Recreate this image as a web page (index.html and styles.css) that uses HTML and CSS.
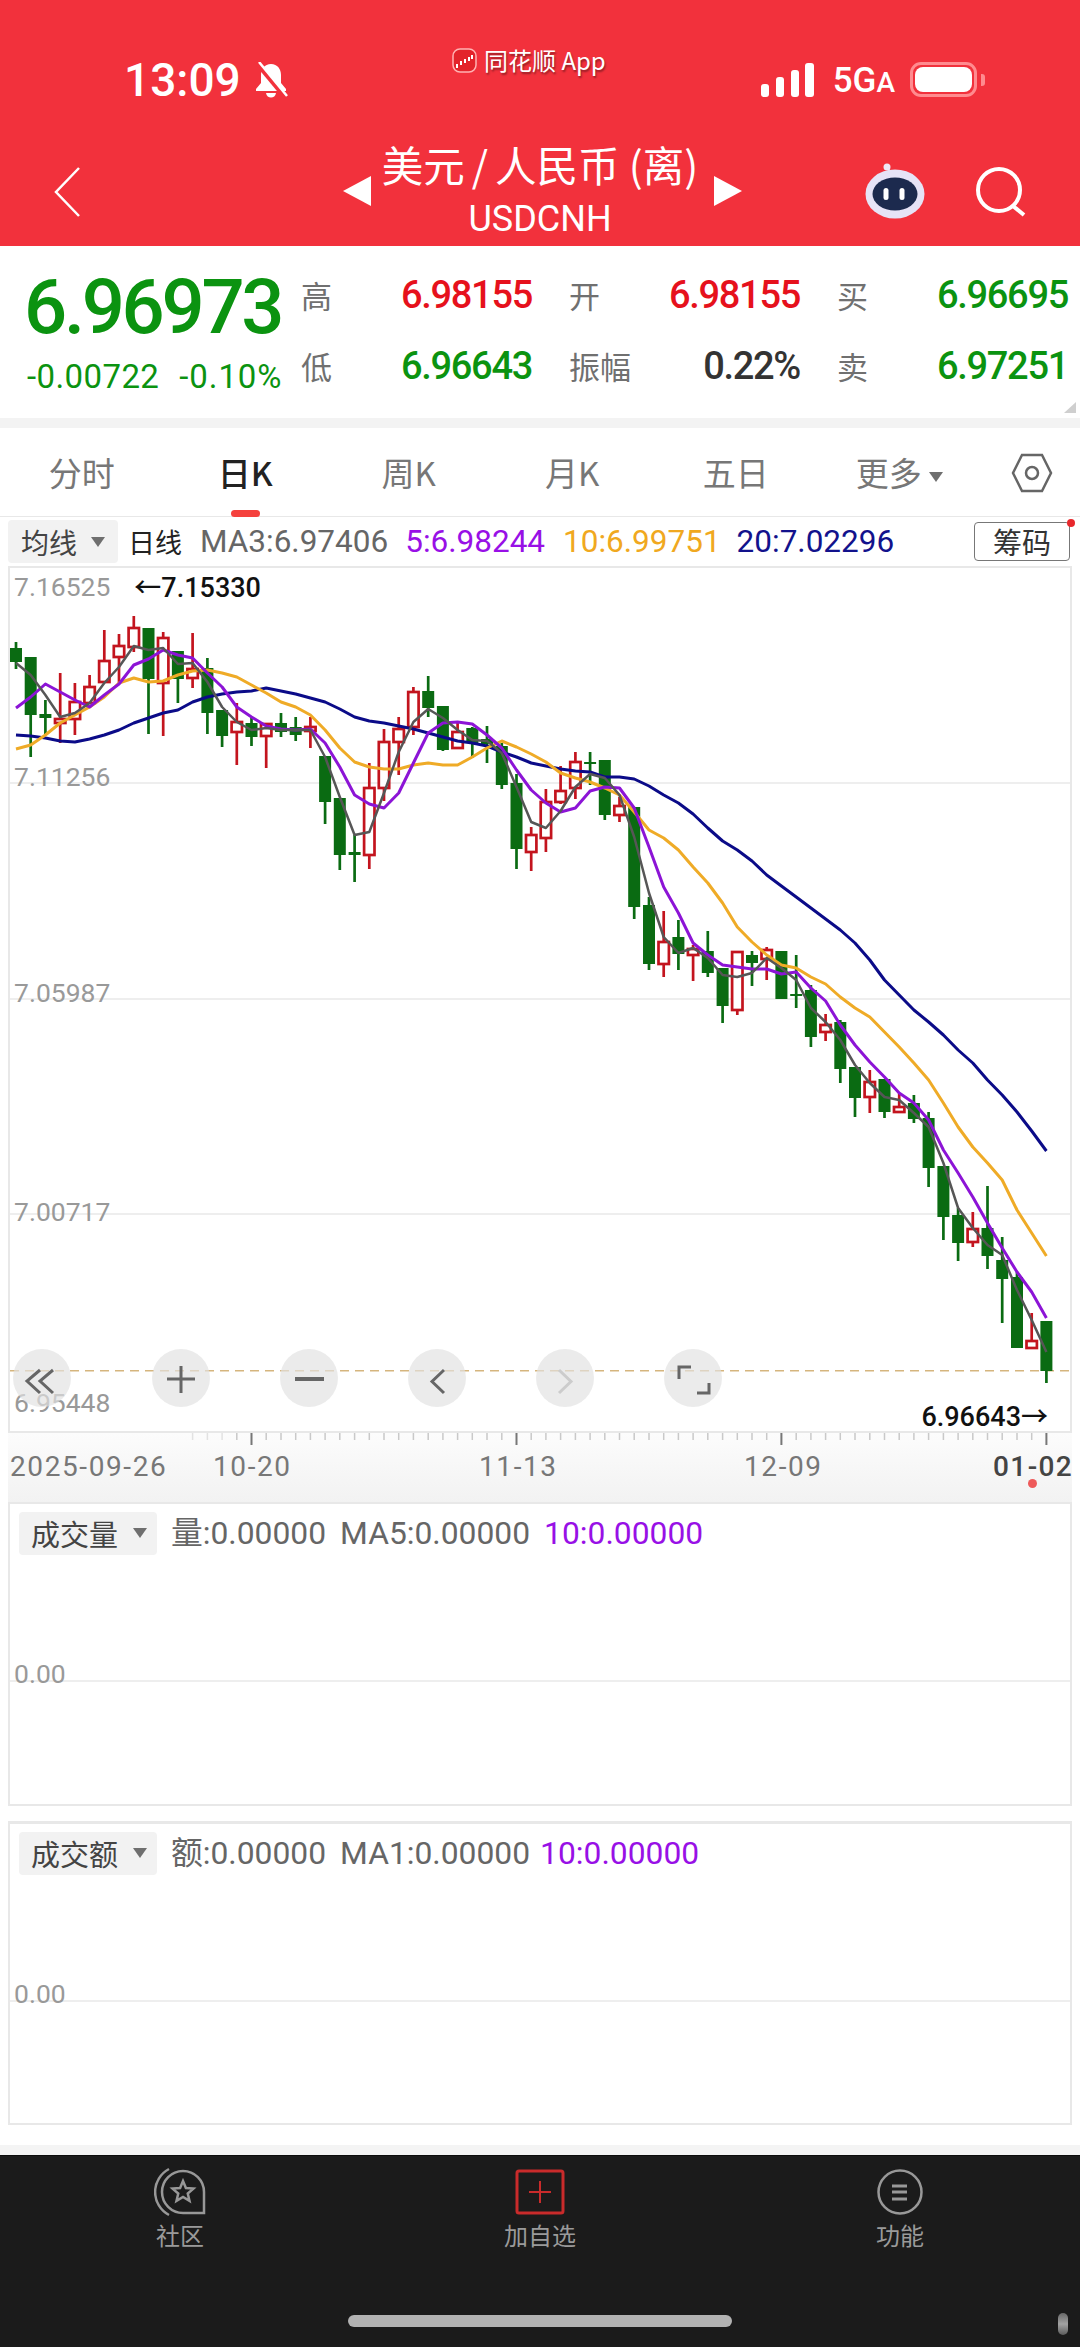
FILE: index.html
```html
<!DOCTYPE html>
<html lang="zh-CN">
<head>
<meta charset="utf-8">
<title>美元/人民币 (离)</title>
<link rel="stylesheet" href="styles.css">
</head>
<body>
<div class="screen">
  <header class="hero">
    <div class="status">
      <div class="clock">
        <span class="time">13:09</span>
        <svg class="bell" viewBox="0 0 36 36" width="36" height="36">
          <path class="bell-body" d="M18 2c-6.500 0-10 5-10 11v8l-5 6v2h30v-2l-5-6v-8c0-6-3.500-11-10-11z"/>
          <path class="bell-body" d="M13 31h10c-.5 3-2.500 4.500-5 4.500s-4.500-1.500-5-4.500z"/>
          <path class="bell-cut" d="M3 0l30 36"/>
          <path class="bell-slash" d="M6 0l28 34"/>
        </svg>
      </div>
      <div class="app-back">
        <svg class="app-logo" viewBox="0 0 25 25" width="25" height="25">
          <rect class="logo-frame" x="1" y="1" width="23" height="23" rx="7"/>
          <path class="logo-marks" d="M5 16v4M9 13v4M13 11v4M17 9v4M20 7v4"/>
        </svg>
        <span class="app-name">同花顺 App</span>
      </div>
      <div class="indicators">
        <div class="signal"><i></i><i></i><i></i><i></i></div>
        <span class="net">5G<small>A</small></span>
        <div class="battery"><div class="battery-fill"></div></div>
        <div class="battery-tip"></div>
      </div>
    </div>
    <nav class="nav">
      <div class="nav-left">
        <svg class="back" viewBox="0 0 30 52" width="30" height="52"><path d="M26 2L3 26l23 24"/></svg>
      </div>
      <div class="nav-mid">
        <span class="tri tri-left"></span>
        <div class="title-block">
          <div class="title">美元<span class="slash">/</span>人民币 (离)</div>
          <div class="subtitle">USDCNH</div>
        </div>
        <span class="tri tri-right"></span>
      </div>
      <div class="nav-right">
        <svg class="robot" viewBox="0 0 60 56" width="60" height="56">
          <path class="robot-stem" d="M22 5l5 6"/>
          <circle class="robot-ball" cx="22" cy="4" r="3.500"/>
          <ellipse class="robot-head" cx="30" cy="31" rx="29.500" ry="24.500"/>
          <ellipse class="robot-face" cx="30" cy="31" rx="22.500" ry="16.500"/>
          <rect class="robot-eye" x="18.500" y="25" width="5" height="12" rx="2.500"/>
          <rect class="robot-eye" x="34.500" y="25" width="5" height="12" rx="2.500"/>
        </svg>
        <svg class="search" viewBox="0 0 50 50" width="50" height="50">
          <circle cx="23" cy="23" r="21"/><path d="M37 39l11 9"/>
        </svg>
      </div>
    </nav>
  </header>

  <section class="quote">
    <div class="price-block">
      <div class="price">6.96973</div>
      <div class="change"><span class="chg">-0.00722</span><span class="pct">-0.10%</span></div>
    </div>
    <div class="stats">
      <div class="stat"><span class="k">高</span><span class="v up">6.98155</span></div>
      <div class="stat"><span class="k">开</span><span class="v up">6.98155</span></div>
      <div class="stat"><span class="k">买</span><span class="v down">6.96695</span></div>
      <div class="stat"><span class="k">低</span><span class="v down">6.96643</span></div>
      <div class="stat"><span class="k">振幅</span><span class="v flat">0.22%</span></div>
      <div class="stat"><span class="k">卖</span><span class="v down">6.97251</span></div>
    </div>
    <span class="corner"></span>
  </section>
  <div class="band"></div>

  <div class="tabs">
    <div class="tab">分时</div>
    <div class="tab tab-active">日K</div>
    <div class="tab">周K</div>
    <div class="tab">月K</div>
    <div class="tab">五日</div>
    <div class="tab">更多<span class="caret caret-tab"></span></div>
    <svg class="hex" viewBox="0 0 42 40" width="42" height="40">
      <path d="M11 2h20l9 18-9 18H11L2 20z"/><circle cx="21" cy="20" r="6"/>
    </svg>
  </div>

  <div class="ma-row">
    <div class="select select-ma"><span>均线</span><span class="caret"></span></div>
    <span class="ma-name">日线</span>
    <span class="ma ma-gray">MA3:6.97406</span>
    <span class="ma ma-purple">5:6.98244</span>
    <span class="ma ma-orange">10:6.99751</span>
    <span class="ma ma-navy">20:7.02296</span>
    <div class="chips">筹码<span class="chips-dot"></span></div>
  </div>

  <div class="chart">
    <div class="grid-row">
      <div class="label-line"><span class="axis">7.16525</span><span class="extreme">←7.15330</span></div>
      <span class="axis axis-low">7.11256</span>
    </div>
    <div class="grid-row grid-end"><span class="axis axis-low">7.05987</span></div>
    <div class="grid-row grid-end"><span class="axis axis-lower">7.00717</span></div>
    <div class="grid-last">
      <span class="axis">6.95448</span><span class="extreme extreme-low">6.96643→</span>
    </div>
    <svg id="candles" class="plot" viewBox="10 568 1060 863" width="1060" height="863"></svg>
    <div class="controls">
      <button class="ctl ctl-first"><svg viewBox="0 0 58 58"><path d="M27 21l-13 11 13 12M40 21l-13 11 13 12"/></svg></button>
      <button class="ctl"><svg viewBox="0 0 58 58"><path d="M15 30h28M29 17v27"/></svg></button>
      <button class="ctl"><svg viewBox="0 0 58 58"><path class="thick" d="M15 30h29"/></svg></button>
      <button class="ctl"><svg viewBox="0 0 58 58"><path d="M36 21L24 32.500 36 44"/></svg></button>
      <button class="ctl ctl-off"><svg viewBox="0 0 58 58"><path d="M23 21l12 11.500L23 44"/></svg></button>
      <button class="ctl"><svg viewBox="0 0 58 58"><path d="M15 30V18h12M45 34v10H33"/></svg></button>
    </div>
  </div>

  <div class="xaxis">
    <svg id="ticks" class="ticks" viewBox="8 1433 1064 16" width="1064" height="16"></svg>
    <div class="dates">
      <span>2025-09-26</span><span>10-20</span><span>11-13</span><span>12-09</span><span class="date-last">01-02</span>
    </div>
    <span class="x-dot"></span>
  </div>

  <section class="panel panel-first">
    <div class="panel-head">
      <div class="select"><span>成交量</span><span class="caret"></span></div>
      <span class="ma ma-gray">量:0.00000</span>
      <span class="ma ma-gray">MA5:0.00000</span>
      <span class="ma ma-purple">10:0.00000</span>
    </div>
    <div class="panel-mid"><span class="axis">0.00</span></div>
  </section>

  <section class="panel panel-second">
    <div class="panel-head">
      <div class="select"><span>成交额</span><span class="caret"></span></div>
      <span class="ma ma-gray">额:0.00000</span>
      <span class="ma ma-gray">MA1:0.00000</span>
      <span class="ma ma-purple">10:0.00000</span>
    </div>
    <div class="panel-mid"><span class="axis">0.00</span></div>
  </section>

  <div class="tail"></div>

  <footer class="dock">
    <div class="dock-tabs">
      <div class="dock-item">
        <svg viewBox="0 0 52 52" width="52" height="52">
          <path d="M15 49A26 26 0 0 1 15 3"/>
          <path d="M50 47H29A21 21 0 1 1 50 26Z"/>
          <path d="M29 15l2.900 6.950 7.600.650-5.750 4.950 1.750 7.350L29 31l-6.500 3.900 1.750-7.350-5.750-4.950 7.600-.650z"/>
        </svg>
        <span>社区</span>
      </div>
      <div class="dock-item">
        <svg class="dock-add" viewBox="0 0 52 52" width="52" height="52">
          <rect x="3" y="5" width="46" height="42" rx="2"/>
          <path d="M15 26h22M26 15v22"/>
        </svg>
        <span>加自选</span>
      </div>
      <div class="dock-item">
        <svg viewBox="0 0 52 52" width="52" height="52">
          <circle cx="26" cy="26" r="21.500"/>
          <path class="dock-lines" d="M18 20h15M18 26h15M18 33h15"/>
        </svg>
        <span>功能</span>
      </div>
    </div>
    <div class="home-bar"></div>
    <span class="mark"></span>
  </footer>
</div>
<script src="chart.js"></script>
</body>
</html>
```

FILE: styles.css
```css
* { box-sizing: border-box; }
html, body { margin: 0; padding: 0; background: #fff; }
body { font-family: Roboto, "Noto Sans CJK SC", sans-serif; }
.screen { width: 1080px; height: 2347px; overflow: hidden; position: relative; background: #fff; }

/* header */
.hero { height: 246px; background: #f2313c; color: #fff; display: flex; flex-direction: column; }
.status { height: 128px; display: flex; padding-left: 124px; }
.clock { width: 328px; height: 50px; margin-top: 55px; display: flex; align-items: center; gap: 12px; }
.time { font-size: 46px; font-weight: 500; line-height: 50px; }
.bell { display: block; }
.bell-body { fill: #fff; }
.bell-cut { stroke: #f2313c; stroke-width: 5; fill: none; }
.bell-slash { stroke: #fff; stroke-width: 2.500; fill: none; }
.app-back { width: 309px; height: 28px; margin-top: 46px; display: flex; align-items: center; gap: 7px; }
.app-logo { display: block; }
.logo-frame { fill: #e3242b; stroke: #ffb3b3; stroke-width: 1.500; }
.logo-marks { stroke: #fff; stroke-width: 2; fill: none; }
.app-name { font-family: "Noto Sans CJK SC", sans-serif; font-size: 24px; line-height: 28px; text-shadow: 1px 2px 2px rgba(0,0,0,.4); }
.indicators { margin-top: 62px; height: 35px; display: flex; align-items: center; }
.signal { display: flex; align-items: flex-end; gap: 6.500px; height: 34px; }
.signal i { display: block; width: 8.300px; background: #fff; border-radius: 3px; }
.signal i:nth-child(1) { height: 13px; }
.signal i:nth-child(2) { height: 20px; }
.signal i:nth-child(3) { height: 27px; }
.signal i:nth-child(4) { height: 34px; }
.net { margin-left: 19px; width: 59px; padding-top: 3px; font-size: 35px; font-weight: 500; line-height: 35px; white-space: nowrap; }
.net small { font-size: 28px; }
.battery { margin-left: 18px; width: 67px; height: 35px; padding: 2px; border: 3px solid #ff8b8f; border-radius: 11px; }
.battery-fill { height: 100%; background: #fff; border-radius: 8px; }
.battery-tip { width: 4px; height: 12px; margin-left: 4px; background: #ff8b8f; border-radius: 0 3px 3px 0; }
.nav { height: 118px; display: grid; grid-template-columns: 343px 399px 1fr; }
.nav-left { padding-left: 53px; padding-top: 38px; }
.back { display: block; }
.back path { fill: none; stroke: #fff; stroke-width: 2.500; }
.nav-mid { display: flex; align-items: flex-start; justify-content: space-between; }
.tri { display: block; width: 0; height: 0; margin-top: 48px; border-top: 15px solid transparent; border-bottom: 15px solid transparent; }
.tri-left { border-right: 28px solid #fff; }
.tri-right { border-left: 28px solid #fff; }
.title-block { text-align: center; margin-top: 12px; margin-right: 5px; }
.title { font-family: "Noto Sans CJK SC", sans-serif; font-size: 41.500px; line-height: 48px; white-space: nowrap; }
.slash { margin: 0 7px; }
.subtitle { font-size: 36px; line-height: 40px; margin-top: 11px; }
.nav-right { display: flex; justify-content: flex-end; padding-right: 54px; padding-top: 35px; gap: 51px; align-items: flex-start; }
.robot, .search { display: block; }
.search { margin-top: 4px; }
.search circle, .search path { fill: none; stroke: #fff; stroke-width: 4; }
.robot-stem { stroke: #e9e4f6; stroke-width: 2; fill: none; }
.robot-ball { fill: #efe8f6; }
.robot-head { fill: #e6e3f6; }
.robot-face { fill: #1c2a4e; }
.robot-eye { fill: #fff; }

/* quote */
.quote { height: 172px; display: flex; position: relative; }
.price-block { width: 301px; padding-left: 24px; }
.price { font-size: 76px; font-weight: 500; line-height: 76px; margin-top: 23px; color: #0b9310; letter-spacing: -3.300px; }
.change { margin-top: 14px; margin-left: 3px; display: flex; gap: 20px; font-size: 33px; line-height: 36px; color: #0b9310; }
.chg { letter-spacing: .4px; }
.pct { letter-spacing: .9px; }
.stats { display: grid; grid-template-columns: repeat(3, 231px); column-gap: 37px; grid-template-rows: 71px 71px; padding-top: 15px; }
.stat { display: flex; justify-content: space-between; align-items: center; height: 71px; }
.k { font-family: "Noto Sans CJK SC", sans-serif; font-size: 31px; line-height: 40px; color: #707070; margin-top: -3px; }
.v { font-size: 38px; line-height: 44px; font-weight: 500; letter-spacing: -1.300px; margin-top: -4px; }
.up { color: #e6111c; }
.down { color: #0b9310; }
.flat { color: #333; }
.corner { position: absolute; right: 4px; bottom: 5px; width: 0; height: 0; border-left: 12px solid transparent; border-bottom: 11px solid #cfcfcf; }
.band { height: 10px; background: #f3f3f3; }

/* tabs */
.tabs { height: 89px; display: grid; grid-template-columns: repeat(6, 163.500px) 1fr; align-items: center; border-bottom: 1.500px solid #e8e8e8; }
.tab { position: relative; height: 89px; line-height: 89px; text-align: center; font-family: "Noto Sans CJK SC", Roboto, sans-serif; font-size: 33px; color: #777; }
.tab-active { color: #222; font-weight: 500; }
.tab-active::after { content: ""; position: absolute; left: 67px; bottom: 0; width: 29px; height: 7px; background: #f5413d; border-radius: 4px; }
.caret { display: inline-block; width: 0; height: 0; border-left: 7.500px solid transparent; border-right: 7.500px solid transparent; border-top: 10px solid #6f6f6f; }
.caret-tab { margin-left: 7px; vertical-align: 4px; }
.hex { margin-left: 30px; display: block; }
.hex path, .hex circle { fill: none; stroke: #666; stroke-width: 2.500; }

/* MA row */
.ma-row { height: 49px; padding-left: 8px; display: flex; align-items: center; position: relative; }
.select { display: flex; align-items: center; justify-content: space-between; background: #f2f2f2; border-radius: 4px; height: 43px; font-family: "Noto Sans CJK SC", sans-serif; color: #444; }
.select-ma { width: 110px; padding: 0 13px; font-size: 28px; }
.ma-name { margin-left: 10px; font-family: "Noto Sans CJK SC", sans-serif; font-size: 27px; color: #222; }
.ma { font-size: 31.800px; line-height: 36px; white-space: nowrap; }
.ma-row .ma { font-size: 31.500px; }
.ma-row .ma-gray { margin-left: 18px; }
.ma-row .ma-purple { margin-left: 17px; }
.ma-row .ma-orange { margin-left: 18px; }
.ma-row .ma-navy { margin-left: 16px; }
.ma-gray { color: #666; }
.ma-purple { color: #9810e6; }
.ma-orange { color: #f0a820; }
.ma-navy { color: #12128c; }
.chips { margin-left: auto; margin-right: 10px; width: 96px; height: 39px; border: 1.500px solid #777; border-radius: 4px; text-align: center; line-height: 36px; font-family: "Noto Sans CJK SC", sans-serif; font-size: 29px; color: #333; position: relative; }
.chips-dot { position: absolute; right: -6px; top: -4px; width: 8px; height: 8px; background: #e8282c; border-radius: 50%; }

/* chart */
.chart { position: relative; margin-left: 8px; width: 1064px; height: 867px; border: 2px solid #e8e8e8; display: grid; grid-template-rows: repeat(4, 1fr); }
.grid-row { border-bottom: 2px solid #eee; display: flex; flex-direction: column; justify-content: space-between; padding-top: 5px; min-height: 0; }
.grid-end { justify-content: flex-end; }
.grid-last { display: flex; align-items: flex-end; justify-content: space-between; padding-bottom: 15px; min-height: 0; }
.label-line { display: flex; align-items: center; }
.axis { font-size: 26.500px; line-height: 26px; color: #999; padding-left: 4px; }
.axis-low { margin-bottom: -8px; }
.axis-lower { margin-bottom: -12px; }
.extreme { font-size: 27px; line-height: 26px; font-weight: 500; color: #111; margin-left: 24px; margin-top: 2px; white-space: nowrap; }
.extreme-low { margin: 0 22px -14px 0; }
.plot { position: absolute; left: 0; top: 0; display: block; }
.last-price { stroke: #d5b57e; stroke-width: 1.500; stroke-dasharray: 9 6; }
.wick { stroke-width: 2.700; }
.wick.red { stroke: #c3141e; }
.wick.green { stroke: #0a6b12; }
.body.green { fill: #0a6b12; }
.body.red { fill: #fff; stroke: #c3141e; stroke-width: 2.700; }
.ma-line { fill: none; stroke-width: 3; stroke-linejoin: round; }
.line-navy { stroke: #0b0b88; }
.line-orange { stroke: #efab27; }
.line-purple { stroke: #8c14d6; }
.line-gray { stroke: #565656; stroke-width: 2.500; }
.controls { position: absolute; left: 3px; top: 781px; display: flex; gap: 70px; }
.ctl { width: 58px; height: 58px; padding: 0; border: 0; border-radius: 50%; background: rgba(226,226,226,.68); }
.ctl-first { margin-right: 11px; }
.ctl svg { display: block; width: 58px; height: 58px; }
.ctl path { fill: none; stroke: #666; stroke-width: 3; }
.ctl path.thick { stroke-width: 4; }
.ctl-off path { stroke: #ccc; }

/* x axis */
.xaxis { position: relative; margin-left: 8px; width: 1064px; height: 69px; background: linear-gradient(#fcfcfc, #f2f2f2); }
.ticks { display: block; }
.tick-minor { stroke: #c9c9c9; stroke-width: 1.500; }
.tick-faint { stroke: #e2e2e2; stroke-width: 1.500; }
.tick-major { stroke: #777; stroke-width: 2; }
.dates { margin-top: 4px; margin-left: 2px; display: grid; grid-template-columns: 203px 266px 265px 249px 77px; font-size: 28px; line-height: 28px; letter-spacing: 1.600px; color: #777; white-space: nowrap; }
.date-last { color: #444; font-weight: 500; letter-spacing: 1.400px; }
.x-dot { position: absolute; left: 1020px; top: 46px; width: 9px; height: 9px; border-radius: 50%; background: #ee5a5a; }

/* indicator panels */
.panel { margin-left: 8px; width: 1064px; height: 304px; border: 2px solid #e8e8e8; }
.panel-second { margin-top: 15px; height: 304px; border-top-width: 3px; }
.panel-head { display: flex; align-items: center; height: 44px; margin-top: 7px; padding-left: 9px; }
.panel-head .select { width: 138px; padding: 0 10px 0 12px; font-size: 29px; }
.panel-head .ma-gray { margin-left: 14px; }
.panel-head .ma-gray + .ma-gray { margin-left: 14px; }
.panel-head .ma-purple { margin-left: 14px; }
.panel-second .panel-head .ma-purple { margin-left: 10px; }
.panel-mid { margin-top: 125px; height: 1px; border-bottom: 2px solid #eee; position: relative; }
.panel-mid .axis { position: absolute; left: 0; top: -19px; }

.tail { height: 30px; margin-top: 0; background: linear-gradient(#fff 20px, #f4f4f4 20px); }

/* dock */
.dock { position: relative; height: 192px; background: #1b1b1b; display: flex; flex-direction: column; align-items: center; border-top: 1px solid #0c0c0c; }
.dock-tabs { display: grid; grid-template-columns: repeat(3, 360px); padding-top: 10px; }
.dock-item { display: flex; flex-direction: column; align-items: center; color: #9a9a9a; font-family: "Noto Sans CJK SC", sans-serif; font-size: 24px; line-height: 32px; }
.dock-item svg { display: block; margin-bottom: 1px; }
.dock-item path, .dock-item circle { fill: none; stroke: #989898; stroke-width: 2.500; }
.dock-item .dock-lines { stroke-width: 3; }
.dock-add rect { fill: none; stroke: #c92b2b; stroke-width: 3; }
.dock-item .dock-add path { stroke: #c92b2b; stroke-width: 2; }
.home-bar { margin-top: 64px; width: 384px; height: 12px; border-radius: 6px; background: #b2b2b2; }
.mark { position: absolute; right: 12px; top: 157px; width: 10px; height: 22px; border-radius: 5px; background: linear-gradient(#888, #ddd 50%, #777); opacity: .7; }
```

FILE: chart.js
```js
// [red?, wick top, body top, body bottom, wick bottom]
var candles = [
[0,642,648,662,669],[0,657,657,715,757],[0,700,714,718,734],[1,673,719,723,743],[1,683,702,719,735],
[1,675,687,703,703],[1,630,661,682,682],[1,634,646,657,683],[1,616,628,647,652],[0,628,628,679,734],
[1,632,638,683,736],[0,651,651,679,703],[1,633,669,678,688],[0,658,668,713,734],[0,710,710,736,747],
[1,703,722,732,765],[0,717,723,737,746],[1,723,724,736,768],[0,713,723,732,737],[0,717,727,735,741],
[1,717,727,731,748],[0,756,756,802,824],[0,798,798,855,870],[0,835,852,855,882],[1,763,788,855,869],
[1,729,742,788,801],[1,717,729,742,775],[1,687,692,727,735],[0,676,691,708,717],[0,706,706,750,751],
[1,723,732,748,748],[0,727,728,743,758],[0,726,739,744,763],[0,743,746,785,789],[0,774,783,849,869],
[1,827,835,852,871],[1,789,802,838,852],[1,766,791,802,804],[1,752,762,788,799],[0,752,762,764,785],
[0,760,760,815,820],[1,797,806,815,822],[0,807,807,907,919],[0,897,905,964,970],[1,911,942,964,977],
[0,920,937,954,970],[1,945,949,955,981],[0,931,951,973,977],[0,968,968,1006,1023],[1,952,952,1010,1015],
[0,951,955,963,986],[1,947,950,959,980],[0,951,951,999,999],[0,955,994,996,1008],[0,985,990,1037,1047],
[1,1014,1025,1032,1041],[0,1020,1022,1069,1083],[0,1067,1067,1098,1117],[1,1070,1082,1097,1113],[0,1079,1079,1112,1118],
[1,1093,1107,1112,1112],[0,1095,1103,1119,1123],[0,1112,1118,1168,1187],[0,1166,1166,1217,1240],[0,1208,1215,1243,1261],
[1,1212,1229,1242,1247],[0,1186,1228,1256,1269],[0,1237,1260,1279,1323],[0,1272,1277,1348,1348],[1,1313,1341,1348,1348],
[0,1321,1321,1371,1383]
];
var lines = {
navy:[735,736,738,741,742,739,735,730,723,718,713,710,702,697,694,692,691,688,691,694,698,702,709,717,721,723,726,729,733,737,741,743,746,752,757,763,766,769,771,772,777,777,779,786,795,803,814,828,841,850,861,875,886,897,908,919,930,943,960,980,995,1010,1022,1035,1050,1063,1080,1095,1112,1131,1151],
orange:[749,745,735,723,715,707,697,683,678,682,681,675,671,670,673,677,685,693,702,707,715,730,748,762,767,769,769,765,763,765,765,757,748,741,747,754,762,773,778,782,788,795,812,830,838,850,867,883,903,927,942,955,965,968,977,984,997,1008,1017,1032,1047,1063,1080,1103,1127,1147,1163,1180,1210,1233,1256],
purple:[708,697,684,692,700,707,695,684,665,659,650,655,658,673,687,707,717,726,729,730,729,743,767,795,804,808,793,763,733,723,722,724,735,748,770,790,803,812,808,791,787,788,808,847,887,913,943,955,965,967,969,969,974,972,988,1001,1025,1045,1062,1077,1093,1103,1120,1150,1173,1197,1223,1248,1272,1292,1318],
gray:[663,675,695,717,713,703,683,667,646,650,648,664,663,682,707,722,730,728,730,730,730,757,797,835,832,793,752,722,709,718,730,740,741,753,787,822,828,811,787,774,778,795,837,893,937,953,948,958,975,977,973,958,968,980,1008,1022,1040,1065,1083,1097,1100,1113,1127,1163,1208,1228,1245,1255,1290,1320,1352]
};
function cx(i) { return 16 + 14.72 * i; }
var svg = '<line class="last-price" x1="10" y1="1370.7" x2="1070" y2="1370.7"/>';
candles.forEach(function (c, i) {
  var x = cx(i).toFixed(1), cls = c[0] ? 'red' : 'green';
  svg += '<line class="wick ' + cls + '" x1="' + x + '" x2="' + x + '" y1="' + c[1] + '" y2="' + c[4] + '"/>';
  if (c[0]) {
    svg += '<rect class="body red" x="' + (cx(i) - 5.2).toFixed(1) + '" y="' + c[2] + '" width="10.4" height="' + (c[3] - c[2]) + '"/>';
  } else {
    svg += '<rect class="body green" x="' + (cx(i) - 6).toFixed(1) + '" y="' + c[2] + '" width="12" height="' + (c[3] - c[2]) + '"/>';
  }
});
['navy', 'orange', 'purple', 'gray'].forEach(function (name) {
  var pts = lines[name].map(function (y, i) { return cx(i).toFixed(1) + ',' + y; }).join(' ');
  svg += '<polyline class="ma-line line-' + name + '" points="' + pts + '"/>';
});
document.getElementById('candles').innerHTML = svg;
var t = '';
for (var i = 12; i <= 70; i++) {
  var major = (i - 16) % 18 === 0;
  var cls = major ? 'tick-major' : (i < 15 ? 'tick-faint' : 'tick-minor');
  t += '<line class="' + cls + '" x1="' + cx(i).toFixed(1) + '" x2="' + cx(i).toFixed(1) + '" y1="1433" y2="' + (major ? 1445 : 1440) + '"/>';
}
document.getElementById('ticks').innerHTML = t;
```
